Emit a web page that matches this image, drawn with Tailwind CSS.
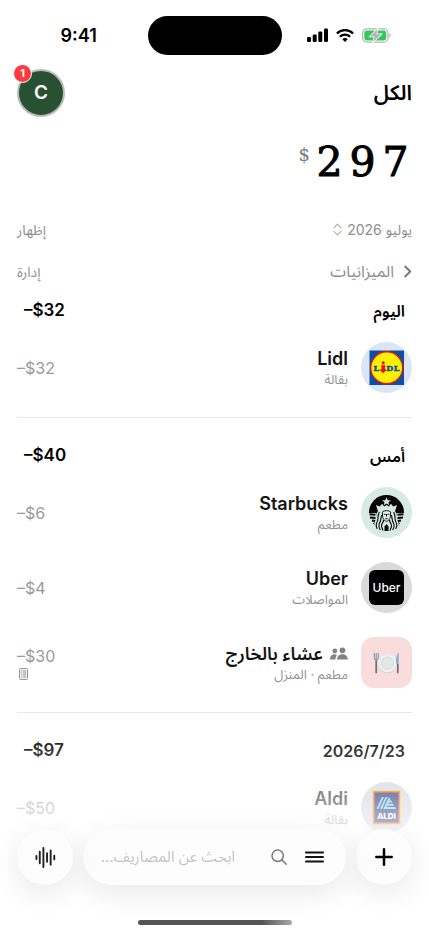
<!DOCTYPE html>
<html lang="ar" dir="rtl">
<head>
<meta charset="utf-8">
<meta name="viewport" content="width=device-width, initial-scale=1">
<title>المصاريف</title>
<script src="https://cdn.jsdelivr.net/npm/@tailwindcss/browser@4"></script>
</head>
<body class="min-h-dvh bg-white font-['Inter','Noto_Sans_Arabic','DejaVu_Sans',sans-serif] text-black">

<!-- Status bar -->
<div dir="ltr" class="grid h-[70px] grid-cols-[1fr_134px_1fr] items-center px-[14px]">
  <span class="pr-1 text-center text-[18px] font-semibold">9:41</span>
  <div class="h-[39px] rounded-full bg-black"></div>
  <div class="flex items-center justify-center gap-2 pl-[2px]">
    <svg class="h-[14px] w-[21px]" viewBox="0 0 21 14" aria-hidden="true"><rect x="0" y="9" width="4" height="5" rx="1.2"/><rect x="5.7" y="6.5" width="4" height="7.500" rx="1.2"/><rect x="11.300" y="3.500" width="4" height="10.500" rx="1.2"/><rect x="17" y="0.500" width="4" height="13.500" rx="1.2"/></svg>
    <svg class="h-[13px] w-[18px]" viewBox="0 0 18 13" fill="none" stroke="#000" stroke-width="2.300" aria-hidden="true"><path d="M.9 4.500a11.600 11.600 0 0 1 16.200 0"/><path d="M3.900 7.700a7.300 7.300 0 0 1 10.200 0"/><path d="M9 13 6.300 10.200a3.900 3.900 0 0 1 5.400 0z" fill="#000" stroke="none"/></svg>
    <svg class="h-[15px] w-[29px]" viewBox="0 0 29 15" aria-hidden="true"><rect x=".6" y=".8" width="25.400" height="13.400" rx="4.300" fill="#fff" stroke="#b5b5b5" stroke-width="1.200"/><rect x="2.300" y="2.500" width="22" height="10" rx="2.700" fill="#34c759"/><path d="M27.300 5.200c1.800.8 1.800 3.800 0 4.600z" fill="#b5b5b5"/><path d="M15.700.8 8 8.500h4.600l-1.500 5.700L19.300 6.300h-4.900z" fill="#b5b5b5" stroke="#fff" stroke-width="1.500" paint-order="stroke"/></svg>
  </div>
</div>

<main class="px-[17px]">
  <header class="flex h-[46px] items-center justify-between">
    <h1 class="text-[21px] font-semibold">الكل</h1>
    <button type="button" aria-label="الحساب" class="relative flex size-12 items-center justify-center rounded-full border-2 border-[#b9bdba] bg-[#275130] text-[19px] font-semibold text-white">C
      <span class="absolute -top-[7px] -left-[6px] flex size-[19px] items-center justify-center rounded-full border border-white bg-[#ff3b40] text-[11px] font-bold">1</span>
    </button>
  </header>

  <div dir="ltr" class="flex h-[92px] items-center justify-end text-right font-['DejaVu_Serif',serif]">
    <span class="mr-[3px] mb-4 text-[18px] text-[#777]">$</span>
    <span class="grid grid-cols-[33px_33px_33px] text-center text-[41px] leading-none [-webkit-text-stroke:1px_black]"><span>2</span><span>9</span><span>7</span></span>
  </div>

  <div class="flex h-[42px] items-center justify-between text-[14px] text-[#8e8e8e]">
    <button type="button" class="flex items-center gap-[5px]">يوليو 2026
      <svg class="h-[13px] w-[9px]" viewBox="0 0 9 13" fill="none" stroke="#b0b0b0" stroke-width="1.200" stroke-linecap="round" stroke-linejoin="round" aria-hidden="true"><path d="m1 4.700 3.500-3.500L8 4.700M1 8.300l3.500 3.500L8 8.300"/></svg>
    </button>
    <button type="button">إظهار</button>
  </div>
  <div class="flex h-[42px] items-center justify-between text-[14px] text-[#8e8e8e]">
    <button type="button" class="flex items-center gap-[10px] text-[16px]">
      <svg class="h-[13px] w-[8px]" viewBox="0 0 8 13" fill="none" stroke="#777" stroke-width="1.900" stroke-linecap="round" stroke-linejoin="round" aria-hidden="true"><path d="m1.200 1.500 5 5-5 5"/></svg>الميزانيات
    </button>
    <button type="button">إدارة</button>
  </div>

  <section class="border-b border-[#e8e8e8] pb-[12px]">
    <div class="flex h-[38px] items-center justify-between px-[7px] text-[16px] font-semibold"><h2>اليوم</h2><span dir="ltr" class="text-[17px]">–$32</span></div>
    <article class="flex h-[75px] items-center gap-[13px]">
      <svg class="size-[51px] shrink-0" viewBox="0 0 51 51" aria-hidden="true"><circle cx="25.500" cy="25.500" r="25.500" fill="#dbe5f3"/><rect x="8.500" y="8.500" width="34.500" height="34.500" fill="#0a50a6"/><circle cx="25.700" cy="25.700" r="16.700" fill="#e3131b"/><circle cx="25.700" cy="25.700" r="15.300" fill="#fff000"/><g font-family="DejaVu Serif" font-weight="700" font-size="8" fill="#0a50a6" stroke="#0a50a6" stroke-width=".5" direction="ltr"><text x="12.600" y="28.500">L</text><text x="25.200" y="28.500">D</text><text x="32.800" y="28.500">L</text></g><circle cx="22.200" cy="20.800" r="1.600" fill="#e3131b"/><path d="m19.500 23.500 4.500-.5v4l1.500 1-3.500 3.200-3.200-3.200 1.700-1v-2z" fill="#e3131b"/></svg>
      <div class="flex-1"><h3 class="text-[18px] leading-[22px] font-semibold text-[#141414]">Lidl</h3><p class="text-[13px] leading-[18px] text-[#929292]">بقالة</p></div>
      <span dir="ltr" class="text-[16px] text-[#9a9a9a]">–$32</span>
    </article>
  </section>

  <section class="border-b border-[#e8e8e8] pt-[19px] pb-[12px]">
    <div class="flex h-[38px] items-center justify-between px-[7px] text-[16px] font-semibold"><h2>أمس</h2><span dir="ltr" class="text-[17px]">–$40</span></div>
    <article class="flex h-[75px] items-center gap-[13px]">
      <svg class="size-[51px] shrink-0" viewBox="0 0 51 51" aria-hidden="true"><circle cx="25.500" cy="25.500" r="25.500" fill="#d8eae4"/><circle cx="25.500" cy="25.500" r="17.500" fill="#050505"/>
        <path d="M7 26h8.500v5c-1 3-3 4-3.500 6l-5-3zM44 26h-8.500v5c1 3 3 4 3.500 6l5-3z" fill="#d8eae4"/>
        <path d="M8.500 27.300l6 .5M9 30.500l5.500.5M11 33.500l3.500.5M42.500 27.300l-6 .5M42 30.500l-5.500.5M40 33.500l-3.500.5" stroke="#050505" stroke-width="1.900"/>
        <path d="M25.500 10.300l1.200 2.900 3.200.1-2.400 2 .8 3-2.800-1.700-2.800 1.700.8-3-2.400-2 3.200-.1z" fill="#d8eae4"/>
        <path d="M15 18l3.800 1.500 2.300-2.700 2 2.700 2.400-1.400 2.400 1.400 2-2.700 2.300 2.700L36 18l-2 6.200c-4.500-2.700-12.500-2.700-17 0z" fill="#d8eae4"/>
        <path d="M17 24c4.500-3.800 12.500-3.800 17 0 3 4.500.8 7 3.300 11 1.200 2.200 0 5-2.300 7.400l-4 1.600h-11l-4-1.600c-2.300-2.400-3.500-5.200-2.300-7.400 2.500-4 .3-6.500 3.300-11z" fill="#d8eae4"/>
        <path d="M18.300 25c-2.500 5 0 7.500-2.800 11-.8 2-.2 4 .8 6M20.500 28c-1 4.500 0 5.500-2.500 9-.5 2 .3 4 1.300 6M22.500 33c0 3-2.500 3.500-2 6.500l1.500 4M32.700 25c2.500 5 0 7.500 2.800 11 .8 2 .2 4-.8 6M30.500 28c1 4.500 0 5.500 2.500 9 .5 2-.3 4-1.300 6M28.500 33c0 3 2.500 3.500 2 6.500l-1.500 4" fill="none" stroke="#050505" stroke-width="1.100"/>
        <path d="M21.300 25c1.700-1.800 6.700-1.800 8.400 0l-.4 5c-.4 2-2 4.300-3.800 4.300s-3.400-2.300-3.800-4.300z" fill="#e4f1ec" stroke="#050505" stroke-width=".9"/>
        <path d="M22.700 27.300h2M26.400 27.300h2M24.200 31.700h2.600M25.500 27v2.600" stroke="#050505" stroke-width=".9"/>
        <path d="M23.500 44v-4.500l2-2.500 2 2.500V44z" fill="#050505"/></svg>
      <div class="flex-1"><h3 class="text-[18px] leading-[22px] font-semibold text-[#141414]">Starbucks</h3><p class="text-[13px] leading-[18px] text-[#929292]">مطعم</p></div>
      <span dir="ltr" class="text-[16px] text-[#9a9a9a]">–$6</span>
    </article>
    <article class="flex h-[75px] items-center gap-[13px]">
      <div class="flex size-[51px] shrink-0 items-center justify-center rounded-full bg-[#d9d9d9]"><span class="flex size-[35px] items-center justify-center rounded-[6px] bg-black text-[12px] font-medium text-white">Uber</span></div>
      <div class="flex-1"><h3 class="text-[18px] leading-[22px] font-semibold text-[#141414]">Uber</h3><p class="text-[13px] leading-[18px] text-[#929292]">المواصلات</p></div>
      <span dir="ltr" class="text-[16px] text-[#9a9a9a]">–$4</span>
    </article>
    <article class="flex h-[75px] items-center gap-[13px]">
      <svg class="size-[51px] shrink-0 rounded-[13px] bg-[#f9dddd]" viewBox="0 0 51 51" aria-hidden="true"><circle cx="26.500" cy="26.800" r="9.500" fill="#c9cfd1"/><circle cx="26.500" cy="26.200" r="9.300" fill="#eff1f1"/><circle cx="26.500" cy="26.200" r="6.200" fill="#e3e7e8" stroke="#cdd3d5" stroke-width=".7"/><path d="M15.200 23.500v12" stroke="#65717d" stroke-width="1.700" stroke-linecap="round"/><path d="M13.300 16v4.500c0 3.300 3.900 3.300 3.900 0V16M15.200 16v6" fill="none" stroke="#8597a8" stroke-width="1.100"/><path d="M36.800 27v8.500" stroke="#7b6a68" stroke-width="1.700" stroke-linecap="round"/><path d="M37.700 15.500c-2.400 2-3 6-2.800 11h2.800z" fill="#86b2d0"/></svg>
      <div class="flex-1"><h3 class="flex items-center gap-[7px] text-[18px] leading-[22px] font-semibold text-[#141414]"><svg class="h-[13px] w-[18px]" viewBox="0 0 18 13" fill="#828287" aria-hidden="true"><circle cx="12.400" cy="3.300" r="2.900"/><path d="M7 12.500c0-7 10.800-7 10.800 0z"/><circle cx="4.800" cy="4" r="2.400"/><path d="M0 12.500c0-5 3.900-6 6.900-4.500-.9 1.100-1.400 2.500-1.400 4.500z"/></svg>عشاء بالخارج</h3><p class="text-[13px] leading-[18px] text-[#929292]">مطعم · المنزل</p></div>
      <div dir="ltr" class="text-[16px] leading-[20px] text-[#9a9a9a]">–$30
        <svg class="mt-[2px] ml-[2px] h-[12px] w-[9px]" viewBox="0 0 9 12" fill="none" stroke="#999" stroke-width="1" aria-hidden="true"><rect x=".5" y=".5" width="8" height="11" rx="1" fill="#eee"/><path d="M2 3h1M4 3h3M2 5h1M4 5h3M2 7h1M4 7h3M2 9h1M4 9h3"/></svg>
      </div>
    </article>
  </section>

  <section class="pt-[19px]">
    <div class="flex h-[38px] items-center justify-between px-[7px] text-[16px] font-semibold"><h2 dir="ltr">2026/7/23</h2><span dir="ltr" class="text-[17px]">–$97</span></div>
    <article class="flex h-[75px] items-center gap-[13px]">
      <svg class="size-[51px] shrink-0" viewBox="0 0 51 51" aria-hidden="true"><circle cx="25.500" cy="25.500" r="25.500" fill="#ccd0df"/><rect x="11" y="8" width="29" height="35" fill="#ffc500"/><rect x="12" y="9" width="27" height="33" fill="#f0501e"/><rect x="13.500" y="10.500" width="24" height="30" fill="#00105f"/><path d="m15.500 27 5.500-12h2l-5.500 12zm3.400 0L24.500 15h2L21 27zm3.500 0L28 15l1.300 2.300L24.500 27zm6-8.500h2l1 2h-4zm-1.400 3.200h5.100l1 2h-7.100zm-1.500 3.200H34l1.200 2.100H24.500z" fill="#65c9ee"/><text x="25.500" y="36.500" text-anchor="middle" direction="ltr" font-family="Inter" font-size="8" font-weight="800" fill="#fff">ALDI</text></svg>
      <div class="flex-1"><h3 class="text-[18px] leading-[22px] font-semibold text-[#141414]">Aldi</h3><p class="text-[13px] leading-[18px] text-[#929292]">بقالة</p></div>
      <span dir="ltr" class="text-[16px] text-[#9a9a9a]">–$50</span>
    </article>
  </section>
</main>

<!-- Bottom bar, fading the list underneath -->
<footer class="pointer-events-none fixed inset-x-0 bottom-0 bg-linear-to-b from-white/0 via-white via-[70%] to-white px-[17px] pt-[109px]">
  <div class="pointer-events-auto flex items-center gap-[10px]">
    <button type="button" aria-label="إضافة" class="flex size-14 shrink-0 items-center justify-center rounded-full bg-[#fdfdfd] shadow-[0_8px_30px_rgba(0,0,0,0.09)]"><svg class="size-[18px]" viewBox="0 0 18 18" stroke="#000" stroke-width="2.500" stroke-linecap="round" aria-hidden="true"><path d="M9 1.300v15.400M1.300 9h15.400"/></svg></button>
    <form role="search" class="flex h-14 min-w-0 flex-1 items-center rounded-full bg-[#fdfdfd] pr-[22px] pl-[14px] shadow-[0_8px_30px_rgba(0,0,0,0.09)]">
      <button type="button" aria-label="القائمة"><svg class="h-[12px] w-[19px]" viewBox="0 0 19 12" stroke="#111" stroke-width="2" stroke-linecap="round" aria-hidden="true"><path d="M1 1.500h17M1 6h17M1 10.500h17"/></svg></button>
      <label for="search" aria-label="بحث" class="mr-[18px] shrink-0"><svg class="size-[16px]" viewBox="0 0 16 16" fill="none" stroke="#777" stroke-width="1.500" stroke-linecap="round" aria-hidden="true"><circle cx="6.700" cy="6.700" r="5.700"/><path d="m11 11 4.200 4.200"/></svg></label>
      <input id="search" type="text" placeholder="ابحث عن المصاريف..." class="mr-9 w-full min-w-0 bg-transparent text-[15px] outline-none placeholder:text-[#c2c2c2]">
    </form>
    <button type="button" aria-label="إدخال صوتي" class="flex size-14 shrink-0 items-center justify-center rounded-full bg-[#fdfdfd] shadow-[0_8px_30px_rgba(0,0,0,0.09)]"><svg class="h-[23px] w-[21px]" viewBox="0 0 22 23" stroke="#222" stroke-width="2" stroke-linecap="round" aria-hidden="true"><path d="M1.500 10v3M5 5.500v12M8.800 1.500v20M12.600 7v9M16.400 4v15M20.200 9.500v4"/></svg></button>
  </div>
  <div class="mx-auto mt-[35px] mb-[9px] h-[5px] w-[154px] rounded-full bg-linear-to-r from-[#555] from-80% to-[#aaa]"></div>
</footer>
</body>
</html>
